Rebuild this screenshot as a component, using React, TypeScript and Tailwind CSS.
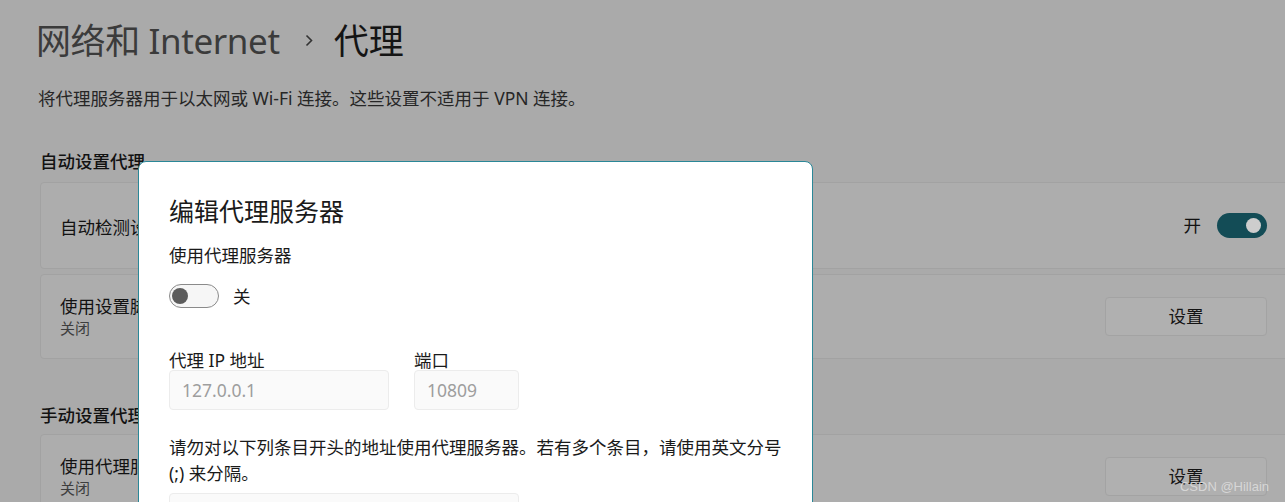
import React from "react";

const Toggle = ({ on }: { on: boolean }) =>
  on ? (
    <div className="w-[50px] h-[25px] rounded-full bg-[#134c56] flex items-center justify-end pr-[6px]">
      <div className="w-[15px] h-[15px] rounded-full bg-[#cdcdcd]" />
    </div>
  ) : (
    <div className="w-[50px] h-[24px] rounded-full border border-[#8a8a8a] bg-[#f6f6f6] flex items-center pl-[2px]">
      <div className="w-[16px] h-[16px] rounded-full bg-[#5c5c5c]" />
    </div>
  );

const SetButton = () => (
  <button className="w-[162px] h-[39px] rounded-[4px] border border-[#a3a3a3] bg-[#b0b0b0] text-[17.5px] text-[#141414]">
    设置
  </button>
);

const Field = ({ value, width }: { value: string; width: string }) => (
  <div className={`${width} h-[40px] rounded-[4px] border border-[#ececec] bg-[#fafafa] flex items-center pl-[12px] text-[17.5px] text-[#9e9e9e]`}>
    {value}
  </div>
);

export default function App() {
  return (
    <div className="relative w-[1285px] h-[502px] overflow-hidden bg-[#aaaaaa] text-[#121212] font-['Noto_Sans','Noto_Sans_CJK_SC',sans-serif]">
      {/* Settings page behind the dialog */}
      <div className="pl-[40px]">
        <div className="h-[80px] flex items-center -ml-[4px] text-[35px] leading-none">
          <span className="text-[#3b3b3b] tracking-[-0.4px]">网络和 Internet</span>
          <svg className="ml-[25px] mr-[21px]" width="8" height="13" viewBox="0 0 8 13">
            <path d="M1.5 1.5 L6.5 6.5 L1.5 11.5" fill="none" stroke="#333" strokeWidth="1.6" />
          </svg>
          <span className="text-[#141414]">代理</span>
        </div>
        <p className="mt-[6px] h-[24px] leading-[24px] -ml-[2px] text-[17.5px] text-[#262626]">
          将代理服务器用于以太网或 Wi-Fi 连接。这些设置不适用于 VPN 连接。
        </p>

        <h2 className="mt-[39px] h-[24px] leading-[24px] text-[17.5px] font-medium">自动设置代理</h2>
        <div className="mt-[9px] h-[87px] w-[1250px] rounded-[4px] border border-[#a2a2a2] bg-[#adadad] flex items-center justify-between pl-[19px] pr-[22px] pt-[4px]">
          <span className="text-[17.5px]">自动检测设置</span>
          <div className="flex items-center gap-[16px] -mt-[4px]">
            <span className="text-[17.5px]">开</span>
            <Toggle on />
          </div>
        </div>
        <div className="mt-[5px] h-[85px] w-[1250px] rounded-[4px] border border-[#a2a2a2] bg-[#adadad] flex items-center justify-between pl-[19px] pr-[22px]">
          <div className="flex flex-col">
            <span className="text-[17.5px] leading-[23px]">使用设置脚本</span>
            <span className="text-[15px] leading-[20px] text-[#3e3e3e]">关闭</span>
          </div>
          <SetButton />
        </div>

        <h2 className="mt-[44px] h-[24px] leading-[24px] text-[17.5px] font-medium">手动设置代理</h2>
        <div className="mt-[7px] h-[85px] w-[1250px] rounded-[4px] border border-[#a2a2a2] bg-[#adadad] flex items-center justify-between pl-[19px] pr-[22px]">
          <div className="flex flex-col">
            <span className="text-[17.5px] leading-[23px]">使用代理服务器</span>
            <span className="text-[15px] leading-[20px] text-[#3e3e3e]">关闭</span>
          </div>
          <SetButton />
        </div>
      </div>

      {/* Edit proxy dialog */}
      <div className="absolute left-[138px] top-[161px] w-[675px] h-[420px] rounded-[8px] border border-[#2a8797] bg-white pl-[30px] pt-[33px] text-[#1a1a1a]">
        <h1 className="h-[32px] leading-[32px] text-[25px] font-normal">编辑代理服务器</h1>
        <p className="mt-[16px] h-[24px] leading-[24px] text-[17.5px]">使用代理服务器</p>
        <div className="mt-[16px] flex items-center gap-[14px]">
          <Toggle on={false} />
          <span className="text-[17.5px]">关</span>
        </div>

        <div className="mt-[41px] flex gap-[25px]">
          <div className="flex flex-col">
            <span className="h-[20px] leading-[20px] text-[17.5px]">代理 IP 地址</span>
            <Field value="127.0.0.1" width="w-[220px]" />
          </div>
          <div className="flex flex-col">
            <span className="h-[20px] leading-[20px] text-[17.5px]">端口</span>
            <Field value="10809" width="w-[105px]" />
          </div>
        </div>

        <p className="mt-[24px] leading-[26px] text-[17.5px] whitespace-nowrap">
          请勿对以下列条目开头的地址使用代理服务器。若有多个条目，请使用英文分号
          <br />
          (;) 来分隔。
        </p>
        <div className="mt-[7px] w-[350px] h-[40px] rounded-[4px] border border-[#ececec] bg-[#fafafa]" />
      </div>

      {/* Watermark */}
      <div className="absolute right-[16px] bottom-[7px] text-[13px] leading-[16px] text-[#dcdcdc]/90 font-['Liberation_Sans',sans-serif]">
        CSDN @Hillain
      </div>
    </div>
  );
}
